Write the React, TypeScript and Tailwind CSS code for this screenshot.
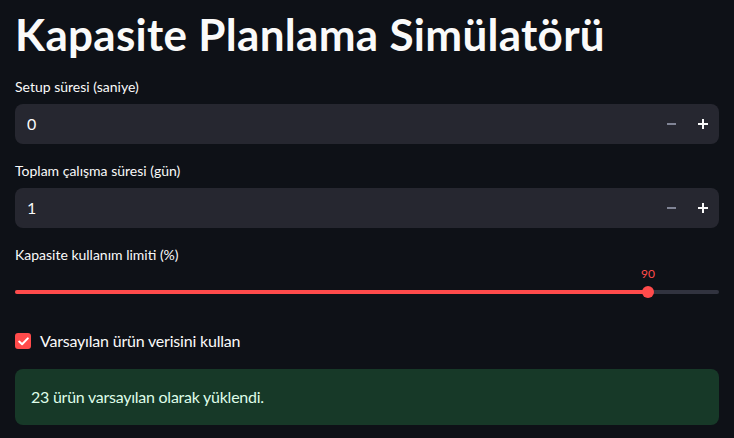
import React from "react";

const font = { fontFamily: "Lato, 'Noto Sans', sans-serif" };

function NumberInput({ value }: { value: string }) {
  return (
    <div className="flex h-10 w-full items-center rounded-lg bg-[#262730]">
      <div className="flex-1 pl-3 text-[16px] text-[#fafafa]">{value}</div>
      <div className="flex h-full items-center">
        <div className="flex h-full w-8 items-center justify-center">
          <div className="h-[2px] w-[9px] bg-[#808495]" />
        </div>
        <div className="flex h-full w-8 items-center justify-center">
          <svg width="10" height="10" viewBox="0 0 10 10">
            <rect x="4" y="0" width="2" height="10" fill="#fafafa" />
            <rect x="0" y="4" width="10" height="2" fill="#fafafa" />
          </svg>
        </div>
      </div>
    </div>
  );
}

export default function App() {
  return (
    <div className="min-h-[438px] w-full bg-[#0e1117] text-[#fafafa]" style={font}>
      <div className="px-[15px] pt-[8px]">
        <h1 className="text-[44px] font-bold leading-[52px] tracking-[0.3px]">Kapasite Planlama Simülatörü</h1>

        <div className="mt-[17px] text-[14px] leading-[20px]">Setup süresi (saniye)</div>
        <div className="mt-[7px]">
          <NumberInput value="0" />
        </div>

        <div className="mt-[17px] text-[14px] leading-[20px]">Toplam çalışma süresi (gün)</div>
        <div className="mt-[7px]">
          <NumberInput value="1" />
        </div>

        <div className="mt-[17px] text-[14px] leading-[20px]">Kapasite kullanım limiti (%)</div>
        <div className="relative mt-[2px] h-[40px]">
          <div className="absolute left-[622px] top-0 w-[22px] text-center text-[12px] leading-[14px] text-[#ff4b4b]">90</div>
          <div className="absolute left-0 right-0 top-[23px] h-[4px] rounded-full bg-[#31333f]" />
          <div className="absolute left-0 top-[23px] h-[4px] w-[634px] rounded-full bg-[#ff4b4b]" />
          <div className="absolute left-[627px] top-[19px] h-[12px] w-[12px] rounded-full bg-[#ff4b4b]" />
        </div>

        <div className="mt-[22px] flex items-center gap-[9px]">
          <div className="flex h-[16px] w-[16px] items-center justify-center rounded-[3px] bg-[#ff4b4b]">
            <svg width="11" height="9" viewBox="0 0 11 9">
              <path d="M1.2 4.6 L4.1 7.3 L9.8 1.4" stroke="#fff" strokeWidth="2" fill="none" strokeLinecap="round" strokeLinejoin="round" />
            </svg>
          </div>
          <div className="text-[16px] leading-[24px] tracking-[-0.2px]">Varsayılan ürün verisini kullan</div>
        </div>

        <div className="mt-[16px] flex h-[56px] items-center rounded-lg bg-[#173928] px-4 text-[16px] tracking-[-0.25px] text-[#dffde9]">
          23 ürün varsayılan olarak yüklendi.
        </div>
      </div>
    </div>
  );
}
